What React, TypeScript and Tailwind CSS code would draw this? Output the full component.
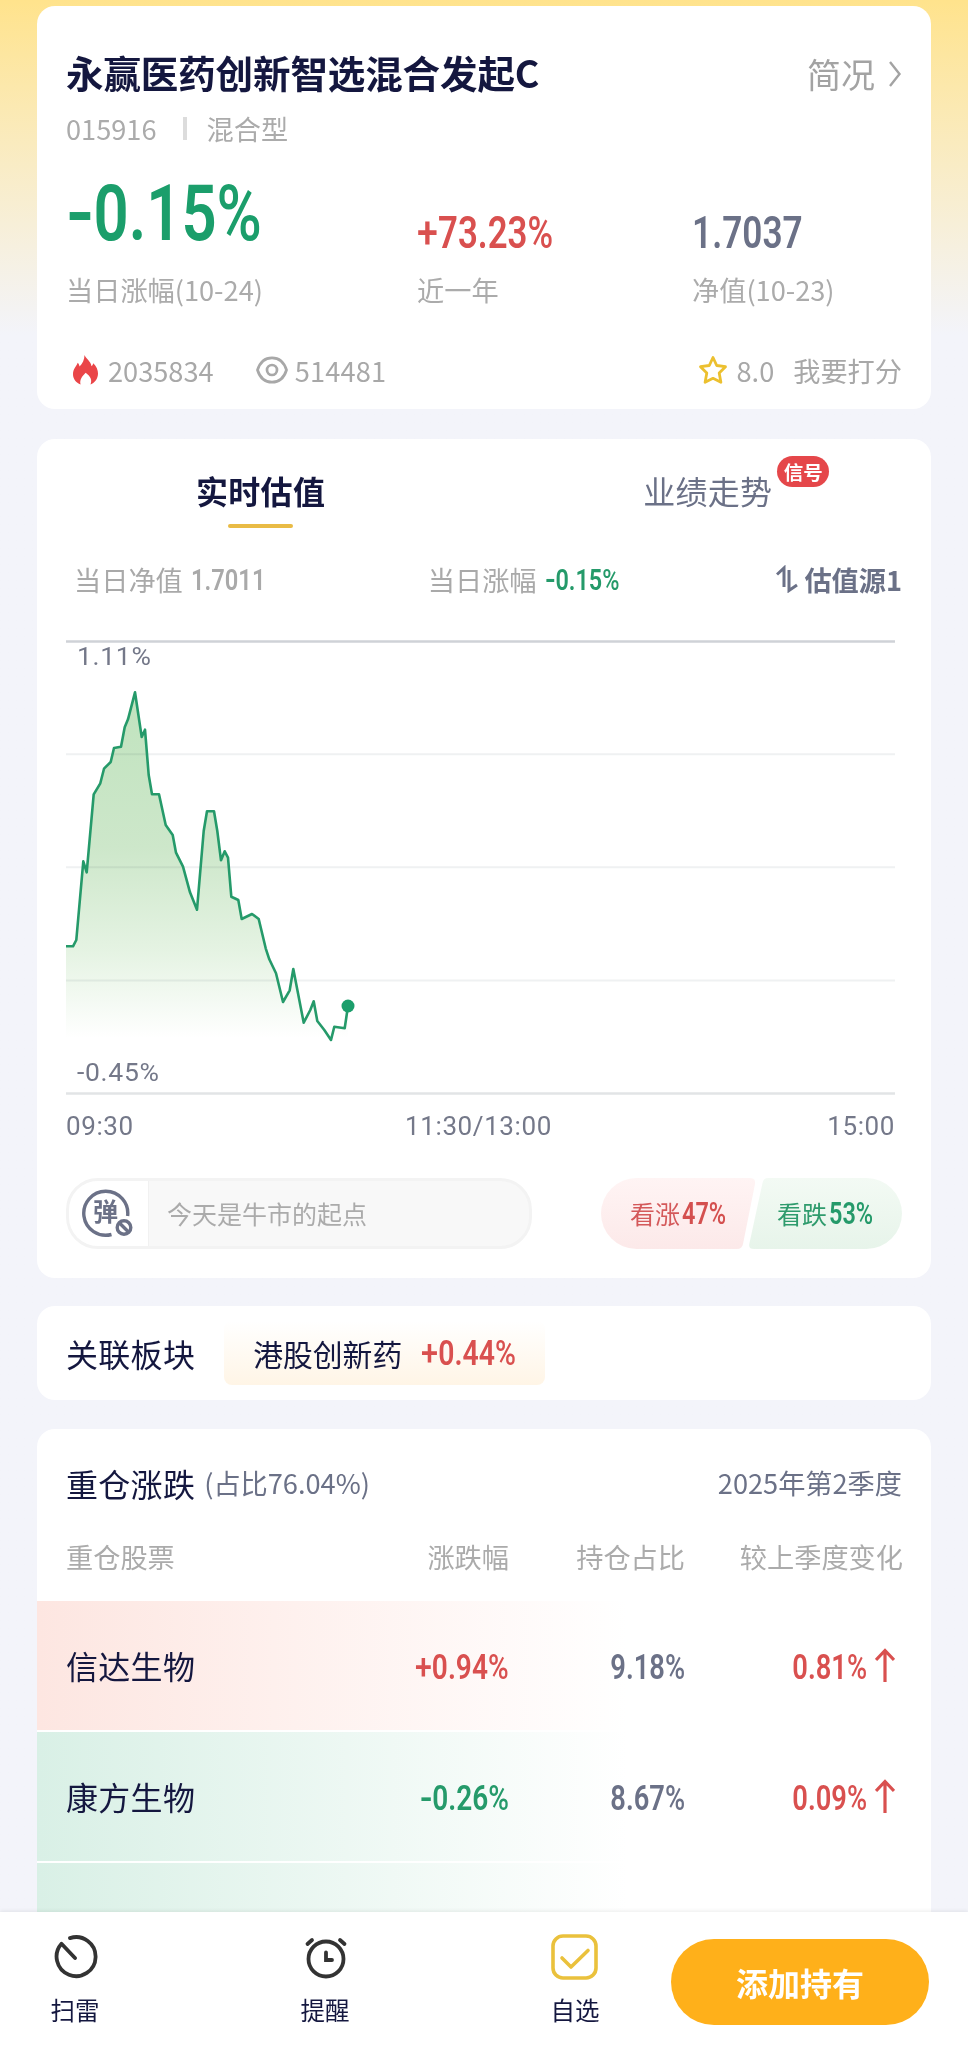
import type { ReactNode } from 'react';
import clsx from 'clsx';

const CJK = 'font-["Noto_Sans_CJK_SC",sans-serif]';

const points: [number, number][] = [
  [0, 306.3], [7, 306.3], [10.3, 300], [17.3, 221.3], [20.7, 232.3], [27.7, 154.3], [34.3, 143.3],
  [38, 128.7], [44.7, 122], [48, 108], [55, 106.7], [58.7, 87.3], [62, 79.3], [69, 52.3], [75.7, 97],
  [79, 89.7], [82.7, 135], [86, 154.3], [93, 154.3], [99.7, 185], [106.7, 195], [110, 212.7],
  [117, 226.7], [124, 252.3], [131, 269.7], [137.7, 191], [141, 171.3], [148, 171.3], [151.3, 191],
  [155, 220.3], [158.7, 211.3], [162, 217.7], [165.3, 256.7], [172.3, 260], [175.7, 279], [186, 274],
  [192.7, 279], [199.7, 308.3], [203.3, 319.3], [210, 333.3], [217, 362], [223.7, 350.3], [227.3, 329],
  [237.7, 382.7], [244.3, 370], [247.7, 361.3], [251.3, 381], [258.3, 390], [265, 400], [268.3, 386.7],
  [278.7, 388.3], [282, 366],
];

const stocks = [
  { name: '信达生物', change: '+0.94', ratio: '9.18', diff: '0.81', up: true },
  { name: '康方生物', change: '-0.26', ratio: '8.67', diff: '0.09', up: false },
];

// 窄体数字，符号和百分号单独调整粗细
function Num({ value, percent, className }: { value: string; percent?: boolean; className?: string }) {
  const sign = /^[+-]/.test(value) ? value[0] : '';
  return (
    <span className={clsx('inline-block whitespace-nowrap font-["Roboto",sans-serif] font-semibold', className)}>
      {sign === '-' && <span className="mr-[.08em] inline-block origin-left scale-x-[1.25]">-</span>}
      {sign === '+' && <span className="mr-[.05em] inline-block origin-left scale-x-[1.08] font-medium">+</span>}
      {value.slice(sign.length)}
      {percent && <span className="font-medium">%</span>}
    </span>
  );
}

function Card({ children, className }: { children: ReactNode; className?: string }) {
  return <section className={clsx('rounded-[18px] bg-white', className)}>{children}</section>;
}

function Summary() {
  return (
    <Card className="h-[403px] px-[29px] pt-[42px]">
      <div className="flex h-12 items-center justify-between">
        <h1 className="text-[37.5px] leading-[48px] font-bold tracking-[-0.1px] text-[#14173f]">
          永赢医药创新智选混合发起C
        </h1>
        <div className="flex items-center pt-1 text-[34px] leading-[48px] text-[#a3a3a3]">
          简况
          <svg className="ml-[13px] h-7 w-[14px]" viewBox="0 0 14 28" fill="none" stroke="#a3a3a3" strokeWidth="2.4">
            <path d="M2 2l9.5 12L2 26" />
          </svg>
        </div>
      </div>
      <div className="mt-[15px] flex h-[34px] items-center text-[27.2px] leading-[34px] text-[#ababab]">
        015916
        <span className="mx-[26px] h-[23px] w-1 bg-[#dcdcdc]" />
        <span className="-ml-[6px]">混合型</span>
      </div>
      <div className="mt-[31px] grid h-20 grid-cols-[351px_275px_1fr]">
        <Num value="-0.15" percent className="origin-left scale-x-[.8] text-[77px] leading-[76px] text-[#1b9e6b]" />
        <Num value="+73.23" percent className="mt-9 origin-left scale-x-[.8] text-[43.5px] leading-[44px] text-[#d9504f]" />
        <Num value="1.7037" className="mt-9 origin-left scale-x-[.81] text-[43.5px] leading-[44px] text-[#6b7187]" />
      </div>
      <div className="mt-[16px] grid grid-cols-[351px_275px_1fr] text-[27.2px] leading-[34px] text-[#ababab]">
        <span>当日涨幅(10-24)</span>
        <span>近一年</span>
        <span>净值(10-23)</span>
      </div>
      <div className="mt-[47px] flex h-[34px] items-center text-[27.2px] leading-[34px] text-[#a8a8a8]">
        <svg className="ml-[7px] h-[30px] w-[25px]" viewBox="0 0 25 30" fill="#ea4548">
          <path d="M11.5 0c1.2 3.6 6.4 6.2 7 11.2.9-.7 1.5-1.7 1.8-3C23.6 11.4 25 15 25 18.500c0 5-3 9-7.500 11 1.800-4.500.2-8-4.800-11.700C9.500 21 6.200 24.600 7.600 29.500 3 27.700 0 24 0 19.300 0 14 3.200 11.800 4.700 7.800c1 1 1.700 2.300 1.800 3.700C9.400 8.600 11.600 4.600 11.500 0z" />
        </svg>
        <span className="ml-[10px]">2035834</span>
        <svg className="ml-[42px] h-7 w-8" viewBox="0 0 32 28" fill="none" stroke="#a8a8a8" strokeWidth="2.7">
          <path d="M1.5 14C4 6 9 1.800 16 1.800S28 6 30.500 14C28 22 23 26.200 16 26.200S4 22 1.500 14z" />
          <circle cx="16" cy="14" r="5" />
        </svg>
        <span className="ml-[7px] tracking-[0.2px]">514481</span>
        <svg className="ml-auto h-[30px] w-[30px]" viewBox="0 0 30 30" fill="none" stroke="#ecc02f" strokeWidth="2.8" strokeLinejoin="round">
          <path d="M15 2.500l3.700 8 8.800 1.200-6.300 6.300 1.700 9.300L15 23.300l-7.900 4 1.700-9.300-6.300-6.300 8.800-1.200z" />
        </svg>
        <span className="ml-[8px]">8.0</span>
        <span className="ml-[19px]">我要打分</span>
      </div>
    </Card>
  );
}

function Chart() {
  const line = points.map((p) => p.join(',')).join(' ');
  return (
    <div className="relative mt-[44px] h-[455px] w-[829px] text-[26.5px] leading-8 tracking-[0.7px] text-[#747889] font-['Roboto',sans-serif]">
      <svg className="block h-full w-full" viewBox="0 0 829 455" fill="none">
        <defs>
          <linearGradient id="area" x1="0" y1="52" x2="0" y2="398" gradientUnits="userSpaceOnUse">
            <stop stopColor="#c0e3be" />
            <stop offset=".45" stopColor="#cde7ca" />
            <stop offset=".75" stopColor="#e5f3e3" />
            <stop offset="1" stopColor="#fff" />
          </linearGradient>
        </defs>
        <path d="M0 114.300H829M0 227.300H829M0 340.500H829" stroke="#eff1f2" strokeWidth="2" />
        <path d="M0 1.500H829" stroke="#cfd2d7" strokeWidth="2.5" />
        <path d="M0 453.500H829" stroke="#e2e4e6" strokeWidth="2.5" />
        <polygon points={`0,398 ${line} 282,398`} fill="url(#area)" className="mix-blend-multiply" />
        <polyline points={line} stroke="#259a6a" strokeWidth="2.6" strokeLinejoin="round" />
        <circle cx="282" cy="366" r="6.5" fill="#1b9e6b" />
      </svg>
      <span className="absolute top-0 left-[11px]">1.11%</span>
      <span className="absolute bottom-[7px] left-[11px]">-0.45%</span>
    </div>
  );
}

function Votes() {
  return (
    <div className="relative flex h-[71px] w-[301px] items-center text-[25px] leading-[34px]">
      <svg className="absolute inset-0" width="301" height="71" viewBox="0 0 301 71">
        <defs>
          <linearGradient id="bull" x1="0" y1="0" x2="0" y2="1">
            <stop stopColor="#fff4f4" />
            <stop offset="1" stopColor="#fce9e9" />
          </linearGradient>
          <linearGradient id="bear" x1="0" y1="0" x2="0" y2="1">
            <stop stopColor="#f3faf4" />
            <stop offset="1" stopColor="#e7f4ea" />
          </linearGradient>
        </defs>
        <path d="M35.500 0H149q6 0 5 6l-12 60q-1 5-6 5H35.500a35.500 35.500 0 010-71z" fill="url(#bull)" />
        <path d="M167 0h98.500a35.500 35.500 0 010 71H153q-6 0-4.500-6l13-60q1-5 5.500-5z" fill="url(#bear)" />
      </svg>
      <span className="relative -mt-[2px] ml-[29px] w-[52px] text-[#d4595a]">看涨</span>
      <Num value="47" percent className="relative w-[95px] origin-left scale-x-[.77] text-[30.5px] text-[#d4504f]" />
      <span className="relative -mt-[2px] w-[52px] text-[#2f9b6d]">看跌</span>
      <Num value="53" percent className="relative w-[60px] origin-left scale-x-[.77] text-[30.5px] text-[#259a6a]" />
    </div>
  );
}

function Valuation() {
  return (
    <Card className="mt-[30px] h-[839px] px-[29px] pt-[29px]">
      <div className="flex h-[60px] text-[32px] leading-[44px] tracking-[0.3px]">
        <div className="ml-[130px] flex flex-col items-center font-bold text-[#14173f]">
          实时估值
          <span className="mt-3 h-1 w-[65px] rounded-full bg-[#e9bb45]" />
        </div>
        <div className="relative ml-[318px] text-[#6b7187]">
          业绩走势
          <span className="absolute -top-3 left-[134px] flex h-[31px] w-[52px] items-center justify-center rounded-full bg-[#e5474a] text-[19.5px] font-bold tracking-normal text-white">
            信号
          </span>
        </div>
      </div>
      <div className="mt-[34px] flex h-[34px] items-center text-[27.2px] leading-[34px] text-[#a9a9a9]">
        <span className="ml-2">当日净值</span>
        <Num value="1.7011" className="mt-[2px] ml-[8px] w-[100px] origin-left scale-x-[.79] text-[30px] font-medium" />
        <span className="ml-[137px]">当日涨幅</span>
        <Num value="-0.15" percent className="mt-[2px] ml-[8px] origin-left scale-x-[.78] text-[30px] text-[#259a6a]" />
        <svg className="ml-auto h-7 w-[22px]" viewBox="0 0 22 28" fill="none" stroke="#6b7187" strokeWidth="3">
          <path d="M1 9.500l7-6.500V22M13 5v20.500L21 20" />
        </svg>
        <span className="ml-[6px] font-bold text-[#6b7187]">估值源1</span>
      </div>
      <Chart />
      <div className="mt-[15px] flex w-[829px] justify-between text-[26px] leading-8 tracking-[0.6px] text-[#747889] font-['Roboto',sans-serif]">
        <span>09:30</span>
        <span className="-ml-[4px]">11:30/13:00</span>
        <span>15:00</span>
      </div>
      <div className="mt-[36px] flex h-[71px] items-center justify-between">
        <div className="flex h-[71px] w-[466px] overflow-hidden rounded-[32px] border-[3px] border-[#f3f3f3] bg-[#f8f8f8]">
          <div className="flex w-[80px] items-center border-r border-[#f1f1f1] bg-white pl-[13px]">
            <svg className="h-[50px] w-[52px]" viewBox="0 0 52 50" fill="none" stroke="#6b7187">
              <path d="M29.500 45.500A22 22 0 1145.600 27" strokeWidth="3.4" />
              <text x="11" y="32" fontSize="25" fontWeight="700" fill="#6b7187" stroke="none">弹</text>
              <circle cx="42" cy="38.5" r="6.8" strokeWidth="3.4" />
              <path d="M37.500 34l9 9" strokeWidth="3.4" />
            </svg>
          </div>
          <span className="ml-[18px] text-[25px] leading-[65px] text-[#ababab]">今天是牛市的起点</span>
        </div>
        <Votes />
      </div>
    </Card>
  );
}

function Sector() {
  return (
    <Card className="mt-7 flex h-[94px] items-center px-[29px] text-[#14173f]">
      <span className="text-[32px] tracking-[0.3px]">关联板块</span>
      <div className="ml-[29px] flex h-16 w-[321px] items-center rounded-lg bg-linear-to-b from-white to-[#fff5e6] pl-[29px]">
        <span className="text-[29.8px]">港股创新药</span>
        <Num value="+0.44" percent className="mt-px ml-[19px] origin-left scale-x-[.8] text-[35.5px] text-[#d9504f]" />
      </div>
    </Card>
  );
}

function Arrow() {
  return (
    <svg className="mb-px ml-2 h-[34px] w-5" viewBox="0 0 20 34" fill="none" stroke="#d9504f" strokeWidth="3.2">
      <path d="M10 34V3M1 12l9-9.500L19 12" />
    </svg>
  );
}

function Holdings() {
  const cols = 'grid grid-cols-[443px_176px_218px] px-[29px]';
  return (
    <Card className="mt-[29px] overflow-hidden rounded-b-none pt-[30px]">
      <div className="flex h-12 items-center px-[29px] text-[27.2px] text-[#6b7187]">
        <span className="text-[32px] tracking-[0.3px] text-[#14173f]">重仓涨跌</span>
        <span className="-mt-[2px] ml-[9px]">(占比76.04%)</span>
        <span className="-mt-[2px] ml-auto">2025年第2季度</span>
      </div>
      <div className={clsx(cols, 'mt-[32px] mb-[28px] text-[27.2px] leading-[34px] text-[#ababab]')}>
        <span className="flex justify-between">
          重仓股票<span>涨跌幅</span>
        </span>
        <span className="text-right">持仓占比</span>
        <span className="text-right">较上季度变化</span>
      </div>
      {stocks.map((s) => (
        <div
          key={s.name}
          className={clsx(
            cols,
            'mb-[2px] h-[129px] items-center to-white to-[590px] bg-linear-to-r',
            s.up ? 'from-[#fde6e1]' : 'from-[#d9f0e6]'
          )}
        >
          <span className="flex items-center justify-between text-[32px] leading-[46px] text-[#14173f]">
            <span className="-mt-[2px] tracking-[0.3px]">{s.name}</span>
            <Num
              value={s.change}
              percent
              className={clsx('mt-[3px] origin-right scale-x-[.79] text-[35.5px]', s.up ? 'text-[#d9504f]' : 'text-[#259a6a]')}
            />
          </span>
          <span className="flex justify-end">
            <Num value={s.ratio} percent className="mt-[3px] origin-right scale-x-[.77] text-[35.5px] leading-[46px] text-[#6b7187]" />
          </span>
          <span className="flex items-center justify-end pr-[8px]">
            <Num value={s.diff} percent className="mt-[3px] origin-right scale-x-[.77] text-[35.5px] leading-[46px] text-[#d9504f]" />
            <Arrow />
          </span>
        </div>
      ))}
      <div className="h-[129px] bg-linear-to-r from-[#d9f0e6] to-white to-[590px]" />
    </Card>
  );
}

function Footer() {
  return (
    <footer className="relative flex h-[139px] shrink-0 bg-white text-[24.5px] leading-[34px] text-[#14173f] shadow-[0_-1px_4px_rgba(0,0,0,0.08)]">
      <div className="ml-[50px] flex w-[50px] flex-col items-center pt-[22px]">
        <svg className="h-[46px] w-[46px]" viewBox="0 0 46 46" fill="none" stroke="#333" strokeWidth="3.8" strokeLinecap="round" strokeLinejoin="round">
          <path d="M23 24L9.500 9.700A19.500 19.500 0 1018 4.100" />
        </svg>
        <span className="mt-[13px] whitespace-nowrap">扫雷</span>
      </div>
      <div className="ml-[200px] flex w-[50px] flex-col items-center pt-[22px]">
        <svg className="h-[46px] w-[46px]" viewBox="0 0 46 46" fill="none" stroke="#333" strokeWidth="3.8" strokeLinecap="round">
          <circle cx="24" cy="25" r="17.5" />
          <path d="M24 18.500V26h6M5.500 10L10 6M42.500 10L38 6" />
        </svg>
        <span className="mt-[13px] whitespace-nowrap">提醒</span>
      </div>
      <div className="ml-[200px] flex w-[50px] flex-col items-center pt-[22px]">
        <svg className="h-[46px] w-[48px]" viewBox="0 0 48 46" fill="none" stroke="#eac13c" strokeWidth="3.6" strokeLinecap="round" strokeLinejoin="round">
          <rect x="2" y="2" width="43" height="42" rx="10" />
          <path d="M11 24l9 9 17-16.500" />
        </svg>
        <span className="mt-[13px] whitespace-nowrap">自选</span>
      </div>
      <button className="mt-[27px] ml-[71px] h-[86px] w-[258px] rounded-full bg-[#ffb01a] text-[32px] font-bold text-white">
        添加持有
      </button>
    </footer>
  );
}

export default function App() {
  return (
    <div className={clsx(CJK, 'flex h-[2051px] w-[968px] flex-col overflow-hidden bg-[#f3f4fa]')}>
      <main className="min-h-0 flex-1 overflow-hidden bg-linear-to-b from-[#ffe38c] to-[#f3f4fa] to-[335px] px-[37px] pt-[6px]">
        <Summary />
        <Valuation />
        <Sector />
        <Holdings />
      </main>
      <Footer />
    </div>
  );
}
